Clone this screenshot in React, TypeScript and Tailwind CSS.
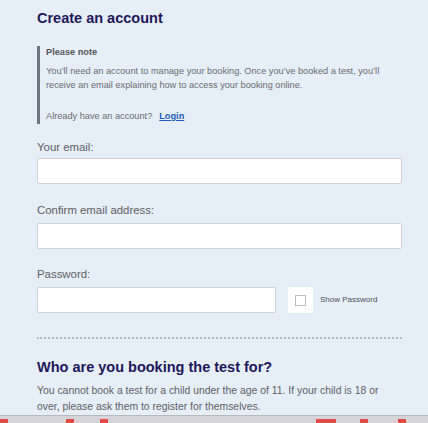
export default function App() {
  return (
    <div className="w-[428px] h-[423px] overflow-hidden bg-[#e6eef7] flex flex-col font-['Liberation_Sans',Arial,sans-serif]">
      <div className="flex-1 pl-[37px] pr-[26px] pt-[8px] overflow-hidden">
        <h1 className="text-[14.5px] leading-[20px] font-bold text-[#21175a]">Create an account</h1>

        <div className="mt-[18px] border-l-[3px] border-[#6c7680] pl-[6px] pb-[1px]">
          <p className="text-[9.2px] leading-[12px] font-bold text-[#55575c]">Please note</p>
          <p className="mt-[6px] text-[9.2px] leading-[14px] text-[#6a6c72]">
            You’ll need an account to manage your booking. Once you’ve booked a test, you’ll receive an email
            explaining how to access your booking online.
          </p>
          <p className="mt-[17px] text-[9.2px] leading-[14px] text-[#6a6c72]">
            Already have an account?
            <a href="#" className="ml-[7px] font-bold text-[#2160bd] underline">
              Login
            </a>
          </p>
        </div>

        <label className="block mt-[16px] text-[11.4px] leading-[14px] text-[#5d5f66]">Your email:</label>
        <input className="block mt-[4px] w-full h-[26px] bg-white border border-[#cfd3d8] rounded-[2px]" />

        <label className="block mt-[19px] text-[11.4px] leading-[14px] text-[#5d5f66]">Confirm email address:</label>
        <input className="block mt-[6px] w-full h-[26px] bg-white border border-[#cfd3d8] rounded-[2px]" />

        <label className="block mt-[18px] text-[11.4px] leading-[14px] text-[#5d5f66]">Password:</label>
        <div className="mt-[6px] flex items-center">
          <input type="password" className="w-[239px] h-[26px] bg-white border border-[#cfd3d8] rounded-[2px]" />
          <div className="ml-[12px] w-[25px] h-[26px] bg-white flex items-center justify-center">
            <div className="w-[11px] h-[11px] border border-[#b9bdc2]" />
          </div>
          <span className="ml-[7px] text-[8px] text-[#4f5157]">Show Password</span>
        </div>

        <div className="mt-[24px] border-t-2 border-dotted border-[#b3bac4]" />

        <h2 className="mt-[18px] text-[14.5px] leading-[20px] font-bold text-[#21175a]">
          Who are you booking the test for?
        </h2>
        <p className="mt-[6px] w-[360px] text-[10.4px] leading-[16px] text-[#5d5f66]">
          You cannot book a test for a child under the age of 11. If your child is 18 or over, please ask them to
          register for themselves.
        </p>
      </div>
      <div className="h-[8px] shrink-0 bg-[#d5d5d7] border-t border-[#b9b9bc] flex items-end overflow-hidden">
        <span className="w-[8px] h-[4px] bg-[#e24a4a]" />
        <span className="ml-[58px] w-[8px] h-[4px] bg-[#e24a4a]" />
        <span className="ml-[26px] w-[8px] h-[4px] bg-[#e24a4a]" />
        <span className="ml-[208px] w-[20px] h-[4px] bg-[#e24a4a]" />
        <span className="ml-[24px] w-[8px] h-[4px] bg-[#e24a4a]" />
        <span className="ml-[30px] w-[8px] h-[4px] bg-[#e24a4a]" />
      </div>
    </div>
  );
}
